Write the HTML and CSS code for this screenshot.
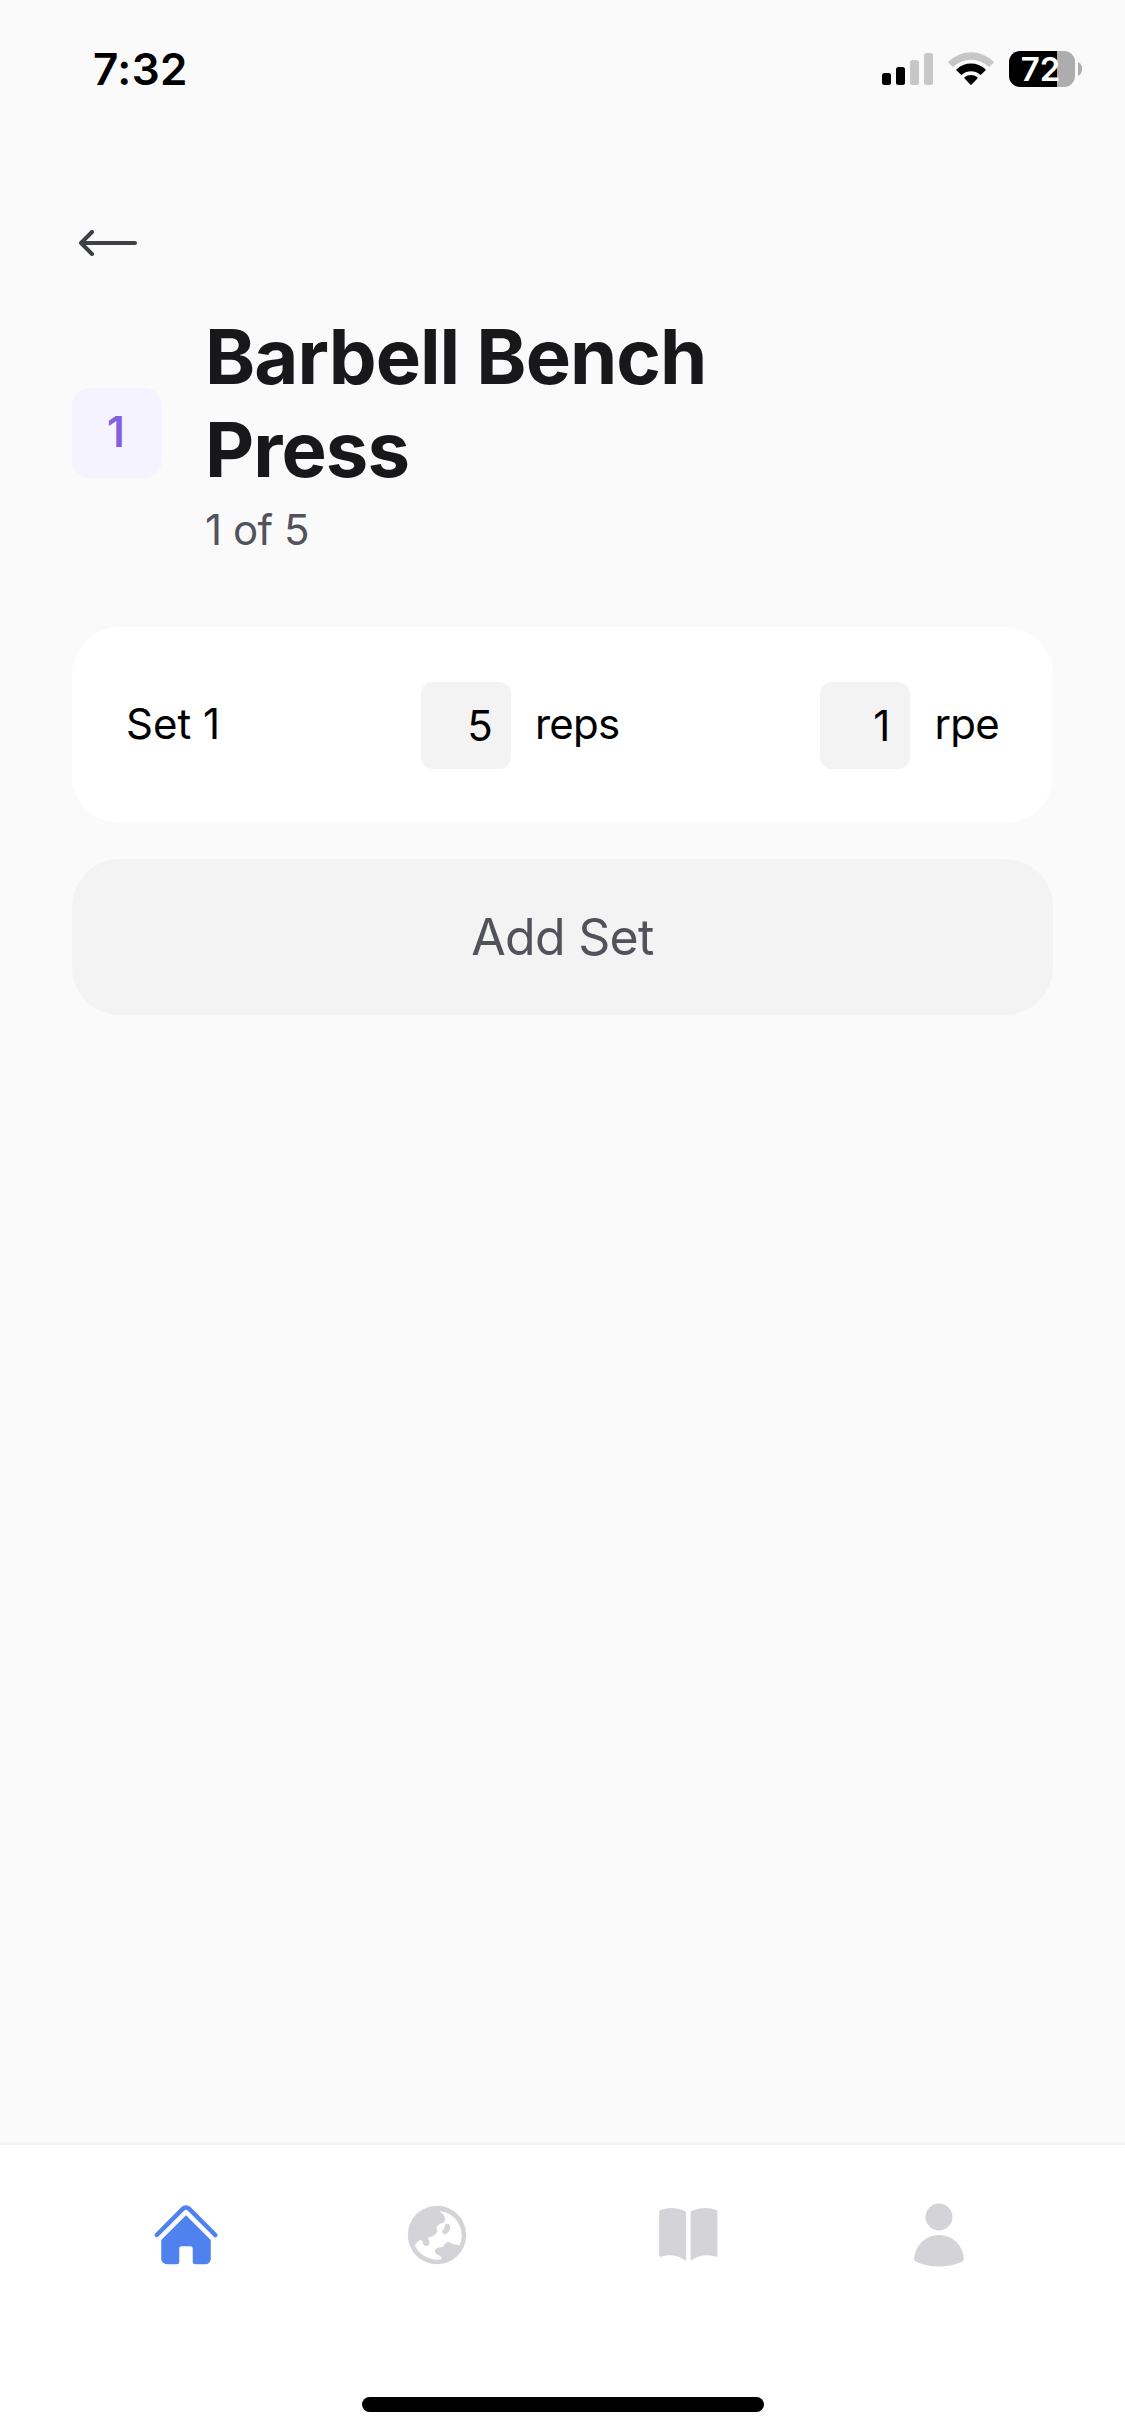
FILE: index.html
```
<!DOCTYPE html>
<html lang="en">
<head>
<meta charset="utf-8">
<title>Barbell Bench Press</title>
<link rel="stylesheet" href="styles.css">
</head>
<body>
<div class="screen">
  <header class="status">
    <span class="time">7:32</span>
    <div class="indicators">
      <svg class="signal" width="51" height="32" viewBox="0 0 51 32">
        <rect x="0" y="20" width="9" height="12" rx="2.5"/>
        <rect x="14" y="14" width="9" height="18" rx="2.5"/>
        <rect class="dim" x="28" y="7" width="9" height="25" rx="2.5"/>
        <rect class="dim" x="42" y="0" width="9" height="32" rx="2.5"/>
      </svg>
      <svg class="wifi" width="46" height="34" viewBox="0 0 46 34">
        <path class="dim" d="M.6 9.500A32 32 0 0 1 45.400 9.500Q46 10.200 45.400 10.900L41.600 14.500Q41 15 40.300 14.400A25.500 25.500 0 0 0 5.700 14.400Q5 15 4.400 14.500L.6 10.900Q0 10.200 .6 9.500Z"/>
        <path d="M8.600 17.300A21 21 0 0 1 37.400 17.300Q38 18 37.400 18.600L33.200 22.500Q32.500 23 31.800 22.400A13.500 13.500 0 0 0 14.200 22.400Q13.500 23 12.800 22.500L8.600 18.600Q8 18 8.600 17.300Z"/>
        <path d="M16.600 25.300A9.800 9.800 0 0 1 29.400 25.300Q30 26 29.400 26.600L23.700 32.500Q23 33.200 22.300 32.500L16.600 26.600Q16 26 16.600 25.300Z"/>
      </svg>
      <div class="battery">
        <span class="battery-body">72</span>
        <svg width="4" height="14" viewBox="0 0 4 14"><path class="cap" d="M0 0Q4 2 4 7T0 14Z"/></svg>
      </div>
    </div>
  </header>

  <main class="content">
    <svg class="back" width="62" height="26" viewBox="0 0 62 26">
      <path d="M58 13H4.500M15 2L4 13L15 24"/>
    </svg>
    <section class="exercise">
      <span class="badge">1</span>
      <div class="heading">
        <h1>Barbell Bench<br>Press</h1>
        <p>1 of 5</p>
      </div>
    </section>
    <section class="set-card">
      <span class="label">Set 1</span>
      <div class="field"><span class="value">5</span><span class="label unit">reps</span></div>
      <div class="field"><span class="value rpe-value">1</span><span class="label unit">rpe</span></div>
    </section>
    <button class="add-set">Add Set</button>
  </main>

  <nav class="tabs">
    <a class="tab active"><svg viewBox="0 0 24 24"><path d="M11.470 3.840a.75.75 0 011.060 0l8.690 8.690a.75.75 0 101.060-1.060l-8.689-8.690a2.250 2.250 0 00-3.182 0l-8.690 8.690a.75.75 0 001.061 1.060l8.690-8.690z"/><path d="M12 5.432l8.159 8.159c.03.03.06.058.091.086v6.198c0 1.035-.84 1.875-1.875 1.875H15a.75.75 0 01-.75-.75v-4.500a.75.75 0 00-.75-.75h-3a.75.75 0 00-.75.75V21a.75.75 0 01-.75.75H5.625a1.875 1.875 0 01-1.875-1.875v-6.198a2.290 2.290 0 00.091-.086L12 5.432z"/></svg></a>
    <a class="tab"><svg viewBox="0 0 72 72">
      <circle cx="36" cy="36" r="29.200"/>
      <path class="ocean" d="M39.500 12A24.600 24.600 0 0 1 58.500 46.500Q54.500 45 51.500 45Q49 42.300 46 43.300Q43 44.500 42.500 47.500Q40 48.500 36.500 48.700Q33.500 49.500 34 53Q34.500 55.500 37.500 56Q40.500 57 41 60.100A24.600 24.600 0 0 1 14.300 47.500Q13.800 44.500 18.500 41.300Q20.500 40.300 21.700 42.500Q21.500 46.500 25.500 47.200Q29 46.500 28.300 42.500Q27.500 40.200 26.500 38.500L31 37.500Q35.500 35.500 36.500 31.500Q34.800 29 36.200 27Q39 24.300 42.500 23.700Q45 20.500 43.500 17.500Q42.500 14.500 39.500 13Z"/>
      <path class="island" d="M46.300 27.500Q46.500 31 44 32.500"/>
    </svg></a>
    <a class="tab"><svg viewBox="0 0 72 72"><path d="M7.200 12.500Q7.200 11.300 8.500 10.900Q21 6.500 33 12Q34 12.500 34 14V60.800Q34 62 33 61.300Q22 53.500 9 57.700Q7.200 58.200 7.200 56.500Z"/><path d="M65.400 12.500Q65.400 11.300 64.100 10.900Q51.600 6.500 39.600 12Q38.600 12.500 38.600 14V60.800Q38.600 62 39.600 61.300Q50.600 53.500 63.600 57.700Q65.400 58.200 65.400 56.500Z"/></svg></a>
    <a class="tab"><svg viewBox="0 0 24 24"><path d="M7.500 6a4.500 4.500 0 119 0 4.500 4.500 0 01-9 0zM3.751 20.105a8.250 8.250 0 0116.498 0 .75.75 0 01-.437.695A18.683 18.683 0 0112 22.500c-2.786 0-5.433-.608-7.812-1.700a.75.75 0 01-.437-.695z"/></svg></a>
  </nav>
  <footer class="home-area"><div class="home-bar"></div></footer>
</div>
</body>
</html>
```
FILE: styles.css
```
* { box-sizing: border-box; }
body { margin: 0; font-family: Inter, "Liberation Sans", sans-serif; }
.screen { width: 1125px; height: 2436px; display: flex; flex-direction: column; background: #fafafa; color: #000; overflow: hidden; }

/* Status bar */
.status { height: 138px; padding: 0 43px 0 93px; display: flex; align-items: center; justify-content: space-between; }
.time { font-size: 44px; font-weight: 600; letter-spacing: .4px; }
.indicators { display: flex; align-items: center; gap: 15px; }
.dim { fill: #c7c7c7; }
.battery { display: flex; align-items: center; gap: 3px; }
.battery-body { width: 66px; height: 36px; border-radius: 11px; padding-right: 3px; background: linear-gradient(90deg, #000 48px, #adadad 48px); display: flex; align-items: center; justify-content: center; color: #fff; font-size: 33px; font-weight: 600; }
.cap { fill: #adadad; }

/* Exercise */
.content { flex: 1; padding: 92px 72px 0; display: flex; flex-direction: column; }
.back { margin-left: 5px; fill: none; stroke: #3f3f46; stroke-width: 4; stroke-linecap: round; stroke-linejoin: round; }
.exercise { display: flex; align-items: center; gap: 43px; margin-top: 54px; }
.badge { width: 90px; height: 90px; border-radius: 18px; padding: 0 2px 3px 0; background: #f5f3ff; color: #8360e0; font-size: 42px; font-weight: 600; display: flex; align-items: center; justify-content: center; }
h1 { margin: 0; font-size: 76px; line-height: 93px; font-weight: 700; letter-spacing: -.95px; color: #18181b; }
p { margin: 0; padding-top: 8px; font-size: 42px; line-height: 52px; letter-spacing: -.5px; color: #52525b; }
.set-card { margin-top: 71px; height: 196px; border-radius: 48px; background: #fff; padding: 0 54px; display: flex; align-items: center; justify-content: space-between; font-size: 42px; }
.label { padding-bottom: 3px; }
.field { display: flex; align-items: center; gap: 24px; }
.unit { letter-spacing: -.7px; }
.value { width: 90px; height: 87px; border-radius: 12px; background: #f3f3f3; display: flex; align-items: center; justify-content: flex-end; padding-right: 18px; }
.rpe-value { padding-right: 20px; }
.add-set { margin-top: 36px; height: 156px; border: 0; border-radius: 48px; padding: 0; background: #f3f3f3; color: #52525b; font: 400 50px Inter, sans-serif; letter-spacing: -.7px; }

/* Bottom navigation */
.tabs { height: 255px; border-top: 3px solid #f4f4f4; background: #fff; padding: 54px 60px 0; display: flex; }
.tab { flex: 1; display: flex; justify-content: center; }
.tab svg { width: 72px; height: 72px; fill: #d4d4d8; }
.tab.active svg { fill: #4f82ee; }
.tab .ocean { fill: #fff; }
.island { fill: none; stroke: #d4d4d8; stroke-width: 5.5; stroke-linecap: round; }
.home-area { height: 39px; background: #fff; display: flex; justify-content: center; }
.home-bar { width: 402px; height: 15px; border-radius: 8px; background: #000; }
```
